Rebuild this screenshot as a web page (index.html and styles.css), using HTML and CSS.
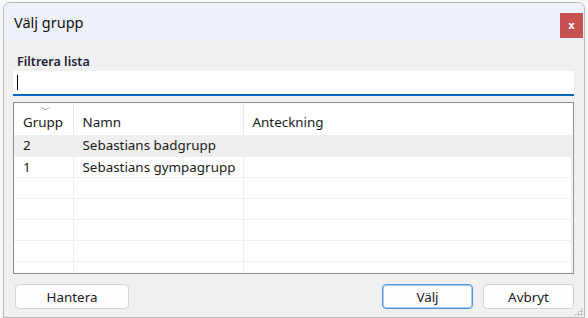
FILE: index.html
```html
<!DOCTYPE html>
<html lang="sv">
  <head>
    <meta charset="UTF-8" />
    <title>Välj grupp</title>
    <link rel="stylesheet" href="styles.css">
  </head>
  <body>
    <div class="dialog">
      <div class="titlebar">
        <span class="title">Välj grupp</span>
        <button class="close-btn">x</button>
      </div>

      <div class="content">
        <label class="filter-label" for="filter">Filtrera lista</label>
        <div class="filter-input"><span class="caret"></span></div>

        <div class="list">
          <table class="grid">
            <thead>
              <tr>
                <th class="col-grupp"><span class="sort-arrow"></span>Grupp</th>
                <th class="col-namn">Namn</th>
                <th class="col-note">Anteckning</th>
              </tr>
            </thead>
            <tbody>
              <tr class="selected"><td>2</td><td>Sebastians badgrupp</td><td></td></tr>
              <tr><td>1</td><td>Sebastians gympagrupp</td><td></td></tr>
              <tr><td></td><td></td><td></td></tr>
              <tr><td></td><td></td><td></td></tr>
              <tr><td></td><td></td><td></td></tr>
              <tr><td></td><td></td><td></td></tr>
              <tr><td></td><td></td><td></td></tr>
            </tbody>
          </table>
        </div>

        <div class="buttons">
          <button class="btn">Hantera</button>
          <span class="spacer"></span>
          <button class="btn default">Välj</button>
          <button class="btn">Avbryt</button>
        </div>
      </div>
      <span class="grip"></span>
    </div>
  </body>
</html>
```

FILE: styles.css
```css
body {
  margin: 0;
  width: 588px;
  height: 318px;
  overflow: hidden;
  background: #f7f7f7;
  font-family: "Noto Sans", "Open Sans", sans-serif;
  font-size: 13.4px;
  color: #1a1a1a;
}
.dialog {
  position: relative;
  margin: 2px 0 0 3px;
  width: 580px;
  height: 314px;
  border: 1px solid #b9b9b9;
  border-radius: 7px 7px 0 0;
  background: #f0f0f0;
  display: flex;
  flex-direction: column;
  overflow: hidden;
}
.titlebar {
  height: 38px;
  background: #eef1f8;
  display: flex;
  align-items: flex-start;
  justify-content: space-between;
}
.title {
  margin: 9px 0 0 10px;
  font-size: 14.5px;
  color: #111;
}
.close-btn {
  margin: 10px 1px 0 0;
  width: 23px;
  height: 25px;
  border: none;
  background: #c75050;
  color: #fff;
  font-family: "DejaVu Sans", sans-serif;
  font-weight: bold;
  font-size: 10px;
  padding: 0;
  line-height: 22px;
}
.content {
  flex: 1;
  display: flex;
  flex-direction: column;
  padding: 0 10px 0 9px;
}
.filter-label {
  margin: 13px 0 0 4px;
  font-size: 12.5px;
  font-weight: 600;
  line-height: 16px;
  color: #1d1d3a;
}
.filter-input {
  height: 23px;
  margin-top: 1px;
  background: #fff;
  border-bottom: 2px solid #0067c0;
  display: flex;
  align-items: center;
}
.caret {
  display: block;
  width: 1px;
  height: 15px;
  margin-left: 4px;
  background: #000;
}
.list {
  margin-top: 6px;
  height: 170px;
  border: 1px solid #8e8f94;
  background: #fff;
  overflow: hidden;
}
.grid {
  width: 558px;
  border-collapse: collapse;
  table-layout: fixed;
}
.grid th {
  position: relative;
  height: 32px;
  padding: 5px 0 0 9px;
  text-align: left;
  font-weight: normal;
  border-right: 1px solid #e8e8e8;
  box-sizing: border-box;
}
.grid th.col-note {
  border-right: none;
}
.col-grupp {
  width: 59px;
}
.col-namn {
  width: 170px;
}
.sort-arrow {
  position: absolute;
  top: 1px;
  left: 28px;
  width: 6px;
  height: 6px;
  border-right: 1px solid #8a8a8a;
  border-bottom: 1px solid #8a8a8a;
  transform: scale(1, 0.5) rotate(45deg);
}
.grid td {
  height: 21px;
  padding: 0 0 0 9px;
  border-right: 1px solid #efefef;
  border-bottom: 1px solid #efefef;
  white-space: nowrap;
  box-sizing: border-box;
}
.grid tr.selected td {
  background: #efefef;
  border-bottom-color: #efefef;
}
.grid td:last-child {
  border-right: 1px solid #e6e6e6;
}
.buttons {
  display: flex;
  gap: 10px;
  margin-top: 10px;
  padding-left: 2px;
}
.spacer {
  flex: 1;
}
.btn {
  width: 114px;
  height: 25px;
  background: #fdfdfd;
  border: 1px solid #d3d3d3;
  border-radius: 4px;
  font-family: inherit;
  font-size: 13.4px;
  color: #1a1a1a;
  padding: 0;
}
.btn.default,
.btn + .btn {
  width: 91px;
}
.btn.default {
  border-color: #4f94da;
  box-shadow: inset 0 0 0 1px #a9cbee;
}
.grip {
  position: absolute;
  right: 1px;
  bottom: 1px;
  width: 9px;
  height: 9px;
  background: radial-gradient(circle, #a8a8a8 0.8px, transparent 1.2px) 0 0 / 3px 3px;
  clip-path: polygon(100% 0, 100% 100%, 0 100%);
}
```
